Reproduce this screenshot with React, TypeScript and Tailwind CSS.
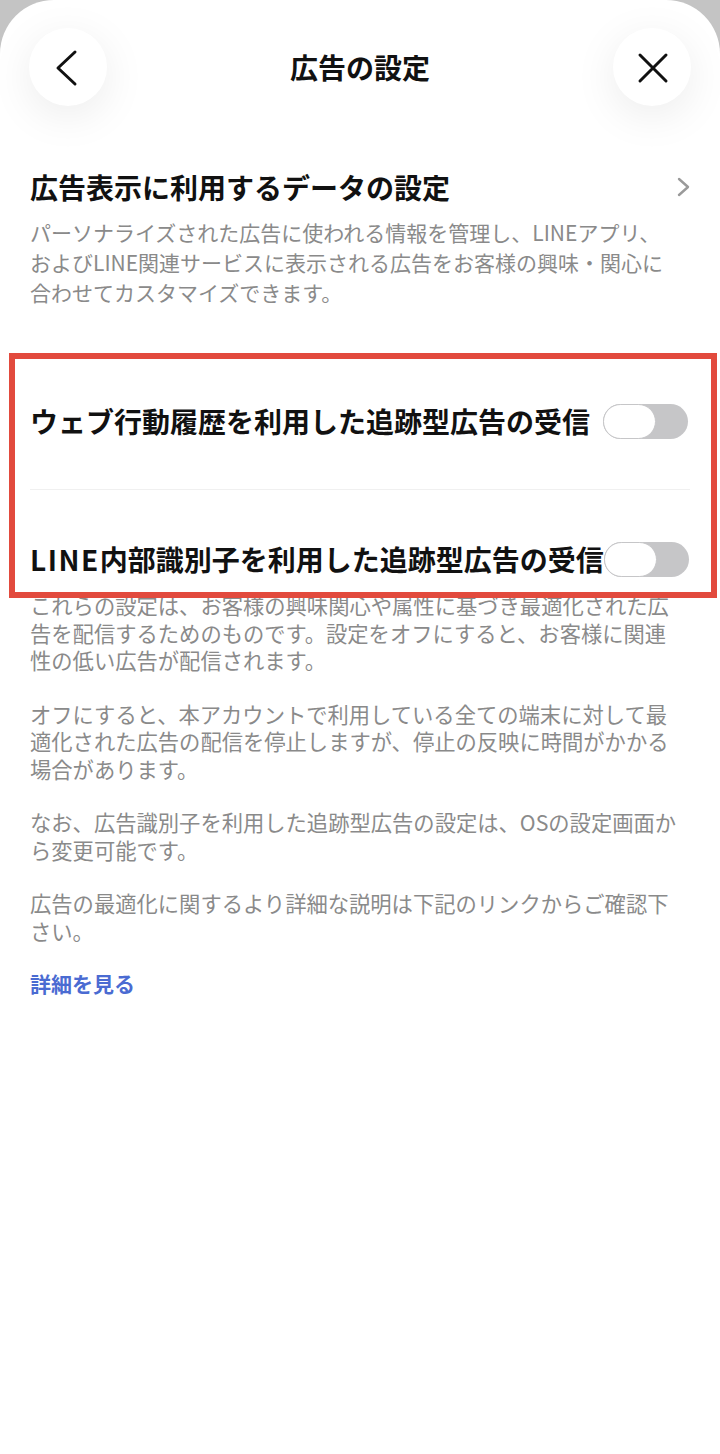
import React from "react";

const FONT = '"Noto Sans CJK JP", "Noto Sans", sans-serif';

function Toggle() {
  return (
    <div className="relative h-[35px] w-[85px] shrink-0 rounded-full bg-[#c6c6c8]">
      <div className="absolute left-0 top-0 h-[35px] w-[53px] rounded-full border-[1.5px] border-[#c6c6c8] bg-white" />
    </div>
  );
}

export default function App() {
  const p1 = [
    "これらの設定は、お客様の興味関心や属性に基づき最適化された広",
    "告を配信するためのものです。設定をオフにすると、お客様に関連",
    "性の低い広告が配信されます。",
  ];
  const p2 = [
    "オフにすると、本アカウントで利用している全ての端末に対して最",
    "適化された広告の配信を停止しますが、停止の反映に時間がかかる",
    "場合があります。",
  ];
  const p3 = [
    "なお、広告識別子を利用した追跡型広告の設定は、OSの設定画面か",
    "ら変更可能です。",
  ];
  const p4 = [
    "広告の最適化に関するより詳細な説明は下記のリンクからご確認下",
    "さい。",
  ];
  const paras = [p1, p2, p3, p4];

  return (
    <div className="min-h-[1454px] w-[720px] bg-[#c4c4c4]" style={{ fontFamily: FONT }}>
      <div className="relative min-h-[1454px] w-[720px] overflow-hidden rounded-t-[54px] bg-white">
        {/* Header */}
        <div className="flex items-center justify-between px-[29px] pt-[28px]">
          <button className="flex h-[78px] w-[78px] items-center justify-center rounded-full bg-white shadow-[0_10px_44px_rgba(0,0,0,0.08)]">
            <svg width="78" height="78" viewBox="0 0 78 78" fill="none">
              <path d="M46 24 L29 40 L46 56" stroke="#111" strokeWidth="3" strokeLinecap="round" strokeLinejoin="round" />
            </svg>
          </button>
          <div className="text-[28px] font-bold leading-[36px] text-[#111]">広告の設定</div>
          <button className="flex h-[78px] w-[78px] items-center justify-center rounded-full bg-white shadow-[0_10px_44px_rgba(0,0,0,0.08)]">
            <svg width="78" height="78" viewBox="0 0 78 78" fill="none">
              <path d="M27 27 L53 53 M53 27 L27 53" stroke="#111" strokeWidth="3" strokeLinecap="round" />
            </svg>
          </button>
        </div>

        {/* Data settings */}
        <div className="mt-[63px] px-[30px]">
          <div className="flex items-center justify-between">
            <div className="text-[28px] font-bold leading-[36px] text-[#111]">広告表示に利用するデータの設定</div>
            <svg width="16" height="22" viewBox="0 0 16 22" fill="none" className="mr-[-2px]">
              <path d="M3 3 L12 11 L3 19" stroke="#9a9a9a" strokeWidth="2.4" strokeLinecap="round" strokeLinejoin="round" />
            </svg>
          </div>
          <div className="mt-[12px] text-[21px] leading-[30px] text-[#8a8a8a]">
            <div className="whitespace-nowrap">パーソナライズされた広告に使われる情報を管理し、LINEアプリ、</div>
            <div className="whitespace-nowrap">およびLINE関連サービスに表示される広告をお客様の興味・関心に</div>
            <div className="whitespace-nowrap">合わせてカスタマイズできます。</div>
          </div>
        </div>

        {/* Toggles */}
        <div className="mt-[46px]">
          <div className="flex h-[136px] items-center justify-between pl-[30px] pr-[32px]">
            <div className="whitespace-nowrap text-[28px] font-bold leading-[36px] text-[#111]">ウェブ行動履歴を利用した追跡型広告の受信</div>
            <Toggle />
          </div>
          <div className="mx-[30px] h-px bg-[#f0f0f0]" />
          <div className="flex items-center justify-between pl-[30px] pr-[32px] pt-[51px]">
            <div className="whitespace-nowrap text-[28px] font-bold leading-[36px] text-[#111]">
              <span className="tracking-[1.5px]">LINE</span>内部識別子を利用した追跡型広告の受信
            </div>
            <Toggle />
          </div>
        </div>

        {/* Notes */}
        <div className="mt-[14px] flex flex-col gap-[26px] px-[30px] text-[21.3px] leading-[27.5px] text-[#8a8a8a]">
          {paras.map((lines, i) => (
            <div key={i}>
              {lines.map((l, j) => (
                <div key={j} className="whitespace-nowrap">{l}</div>
              ))}
            </div>
          ))}
          <div className="text-[21px] font-semibold text-[#4a6bd2]">詳細を見る</div>
        </div>

        {/* Annotation box */}
        <div className="pointer-events-none absolute left-[9px] top-[353px] h-[245px] w-[708px] border-[6px] border-[#e24a3d]" />
      </div>
    </div>
  );
}
